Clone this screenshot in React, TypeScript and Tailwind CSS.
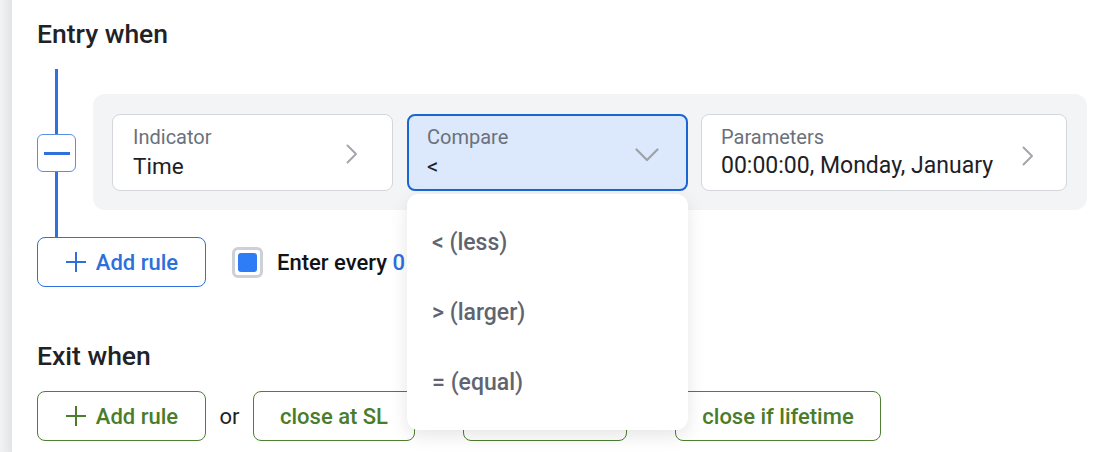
import React from "react";

const ChevronRight = () => (
  <svg width="12" height="20" viewBox="0 0 12 20" fill="none">
    <path d="M1.5 1.5L10 10L1.5 18.5" stroke="#a3a7ad" strokeWidth="2" strokeLinecap="round" strokeLinejoin="round" />
  </svg>
);

const ChevronDown = () => (
  <svg width="24" height="14" viewBox="0 0 24 14" fill="none">
    <path d="M1.5 1.5L12 12L22.5 1.5" stroke="#9da1a8" strokeWidth="2.2" strokeLinecap="round" strokeLinejoin="round" />
  </svg>
);

const Plus = ({ color }: { color: string }) => (
  <svg width="22" height="22" viewBox="0 0 22 22" fill="none">
    <path d="M11 1V21M1 11H21" stroke={color} strokeWidth="2" />
  </svg>
);

export default function App() {
  return (
    <div className="flex w-[1114px] h-[452px] overflow-hidden bg-white" style={{ fontFamily: "Roboto, 'Noto Sans', sans-serif" }}>
      <div className="w-[12px] shrink-0 bg-gradient-to-r from-[#f2f3f5] to-[#e3e4e6]" />
      <div className="flex-1 pl-[25px] pt-[18px]">
        <h2 className="text-[26.5px] leading-[32px] font-medium text-[#1f2328]">Entry when</h2>

        <div className="mt-[19px] flex h-[168px]">
          <div className="w-[39px] flex flex-col items-center">
            <div className="w-[3px] flex-1 bg-[#2f72dd]" />
            <div className="w-[39px] h-[38px] rounded-[6px] border border-[#5a8fe4] bg-white flex items-center justify-center">
              <div className="w-[26px] h-[3px] bg-[#2f72dd]" />
            </div>
            <div className="w-[3px] flex-1 bg-[#2f72dd]" />
          </div>
          <div className="ml-[17px] mt-[25px] mb-[27px] w-[994px] rounded-[12px] bg-[#f3f4f6] pl-[19px] pr-[20px] flex items-center">
            <div className="w-[281px] h-[77px] rounded-[8px] border border-[#d3d6db] bg-white pl-[20px] pr-[34px] pt-[11px] flex items-start justify-between">
              <div>
                <div className="text-[20px] leading-[22px] text-[#6b717b]">Indicator</div>
                <div className="text-[22.5px] leading-[28px] mt-[4px] text-[#1d2127]">Time</div>
              </div>
              <div className="mt-[18px]"><ChevronRight /></div>
            </div>
            <div className="relative ml-[14px] w-[281px] h-[77px]">
              <div className="w-full h-full rounded-[8px] border-2 border-[#1a66d1] bg-[#dce8fc] pl-[18px] pr-[27px] pt-[10px] flex items-start justify-between">
                <div>
                  <div className="text-[20px] leading-[22px] text-[#6b717b]">Compare</div>
                  <div className="text-[22.5px] leading-[28px] mt-[4px] text-[#1d2127]">&lt;</div>
                </div>
                <div className="mt-[22px]"><ChevronDown /></div>
              </div>
              <div className="absolute left-0 top-full mt-[3px] w-full z-10 rounded-[12px] bg-white shadow-[0_6px_18px_rgba(0,0,0,0.10)] pt-[15px] pb-[11px]">
                {["< (less)", "> (larger)", "= (equal)"].map((t) => (
                  <div key={t} className="h-[70px] flex items-center px-[25px] text-[23px] font-medium text-[#5f6570]">{t}</div>
                ))}
              </div>
            </div>
            <div className="ml-[13px] flex-1 h-[77px] rounded-[8px] border border-[#d3d6db] bg-white pl-[19px] pr-[32px] pt-[11px] flex items-start justify-between">
              <div>
                <div className="text-[20px] leading-[22px] text-[#6b717b]">Parameters</div>
                <div className="text-[23px] leading-[28px] mt-[4px] text-[#1d2127] whitespace-nowrap">00:00:00, Monday, January</div>
              </div>
              <div className="mt-[20px]"><ChevronRight /></div>
            </div>
          </div>
        </div>

        <div className="flex items-center">
          <button className="w-[169px] h-[50px] rounded-[8px] border border-[#2f72dd] bg-white flex items-center justify-center gap-[9px] text-[22px] font-medium text-[#2d6fdc]">
            <Plus color="#2d6fdc" />
            <span>Add rule</span>
          </button>
          <div className="ml-[26px] w-[31px] h-[31px] rounded-[6px] border-[3px] border-[#cdd0d6] bg-white flex items-center justify-center">
            <div className="w-[19px] h-[19px] rounded-[3px] bg-[#2f7cf7]" />
          </div>
          <div className="ml-[14px] text-[22px] font-medium text-[#111317] whitespace-nowrap">
            Enter every <span className="text-[#2d6fdc]">0 bars</span>
          </div>
        </div>

        <h2 className="mt-[53px] text-[26.5px] leading-[32px] font-medium text-[#1f2328]">Exit when</h2>

        <div className="mt-[19px] flex items-center">
          <button className="w-[169px] h-[50px] rounded-[8px] border border-[#4d8030] bg-white flex items-center justify-center gap-[9px] text-[22px] font-medium text-[#4a7d2a]">
            <Plus color="#4a7d2a" />
            <span>Add rule</span>
          </button>
          <span className="w-[47px] text-center text-[22px] text-[#1f2328]">or</span>
          <button className="w-[162px] h-[50px] rounded-[8px] border border-[#4d8030] bg-white text-[22px] font-medium text-[#4a7d2a]">close at SL</button>
          <span className="w-[48px] text-center text-[22px] text-[#1f2328]">or</span>
          <button className="w-[164px] h-[50px] rounded-[8px] border border-[#4d8030] bg-white text-[22px] font-medium text-[#4a7d2a]">close at TP</button>
          <span className="w-[48px] text-center text-[22px] text-[#1f2328]">or</span>
          <button className="w-[206px] h-[50px] rounded-[8px] border border-[#4d8030] bg-white text-[22px] font-medium text-[#4a7d2a]">close if lifetime</button>
        </div>
      </div>
    </div>
  );
}
